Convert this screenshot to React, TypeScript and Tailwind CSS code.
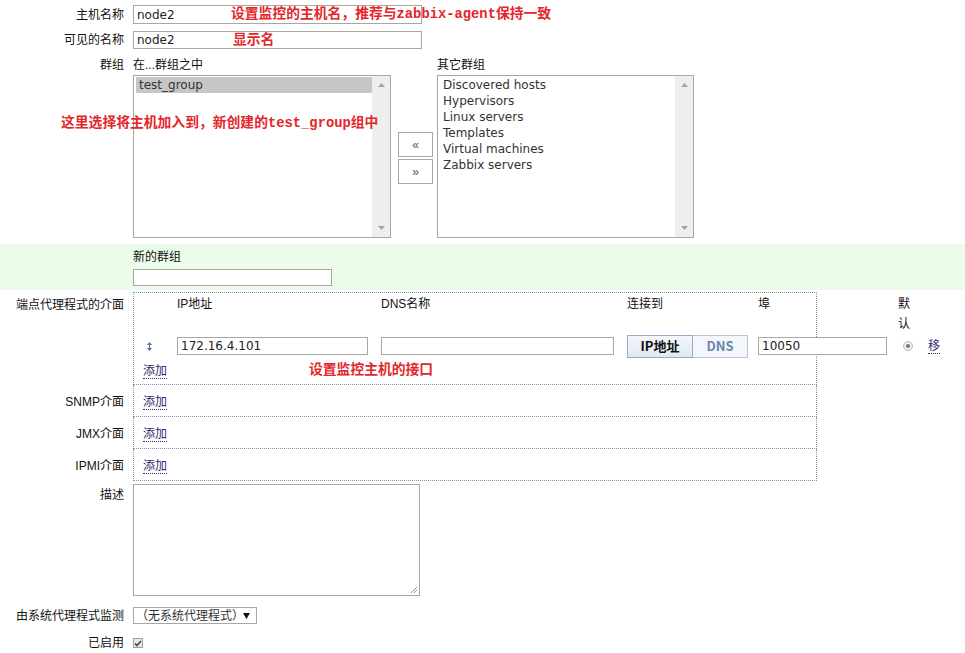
import clsx from "clsx";

const otherGroups = [
  "Discovered hosts",
  "Hypervisors",
  "Linux servers",
  "Templates",
  "Virtual machines",
  "Zabbix servers",
];

function Note({ children, className }: { children: React.ReactNode; className?: string }) {
  return (
    <span
      className={clsx(
        "absolute whitespace-nowrap font-['Liberation_Mono','Noto_Sans_CJK_SC',monospace] text-[13.8px] font-bold leading-[16px] text-[#e3262a]",
        className
      )}
    >
      {children}
    </span>
  );
}

function TextBox({ value, className }: { value?: string; className?: string }) {
  return (
    <div
      className={clsx(
        "flex items-center border border-[#a9a79f] bg-white pl-[3px] font-['DejaVu_Sans',sans-serif] text-[12px] text-[#222]",
        className
      )}
    >
      {value}
    </div>
  );
}

function ScrollTrack() {
  return (
    <div className="flex w-[18px] flex-col items-center justify-between bg-[#eeeeee] py-[7px]">
      <svg width="7" height="4" viewBox="0 0 7 4">
        <path d="M3.5 0 L7 4 L0 4 Z" fill="#a3a3a3" />
      </svg>
      <svg width="7" height="4" viewBox="0 0 7 4">
        <path d="M0 0 L7 0 L3.5 4 Z" fill="#a3a3a3" />
      </svg>
    </div>
  );
}

function ListBox({ items, selected, className }: { items: string[]; selected?: number; className?: string }) {
  return (
    <div className={clsx("flex h-[163px] border border-[#a9a79f] bg-white", className)}>
      <div className="flex-1 pl-[2px] pt-[1px] font-['DejaVu_Sans',sans-serif] text-[12px] leading-[16px] text-[#333]">
        {items.map((it, i) => (
          <div key={it} className={clsx("h-[16px] pl-[3px]", i === selected && "bg-[#c6c6c6]")}>
            {it}
          </div>
        ))}
      </div>
      <ScrollTrack />
    </div>
  );
}

function AddLink() {
  return (
    <span className="border-b border-dotted border-[#2e2a6e] leading-[14px] text-[#2e2a6e]">添加</span>
  );
}

function Label({ children, className }: { children: React.ReactNode; className?: string }) {
  return <div className={clsx("w-[124px] shrink-0 text-right", className)}>{children}</div>;
}

function InterfaceRow({ label }: { label: string }) {
  return (
    <div className="flex h-[32px] items-center">
      <Label className="pt-[2px]">{label}</Label>
      <div className="ml-[9px] flex h-[32px] w-[684px] items-center border-x border-b border-dotted border-[#8593a6] pl-[9px] pt-[3px]">
        <AddLink />
      </div>
    </div>
  );
}

export default function App() {
  return (
    <div className="relative h-[653px] w-[965px] overflow-hidden bg-white pt-[5px] font-['Liberation_Sans','Noto_Sans_CJK_SC',sans-serif] text-[12px] text-[#111]">
      {/* host name */}
      <div className="flex h-[19px] items-center">
        <Label>主机名称</Label>
        <div className="relative ml-[9px]">
          <TextBox value="node2" className="h-[19px] w-[289px]" />
          <Note className="left-[98px] top-[2px]">设置监控的主机名，推荐与zabbix-agent保持一致</Note>
        </div>
      </div>

      {/* visible name */}
      <div className="mt-[7px] flex h-[18px] items-center">
        <Label>可见的名称</Label>
        <div className="relative ml-[9px]">
          <TextBox value="node2" className="h-[18px] w-[289px]" />
          <Note className="left-[100px] top-[2px]">显示名</Note>
        </div>
      </div>

      {/* groups */}
      <div className="relative mt-[7px] flex">
        <Label className="leading-[18px]">群组</Label>
        <div className="ml-[9px] flex">
          <div className="w-[258px]">
            <div className="h-[18px] leading-[18px]">在...群组之中</div>
            <ListBox items={["test_group"]} selected={0} className="mt-[1px]" />
          </div>
          <div className="ml-[7px] flex flex-col gap-[2px] pt-[76px]">
            <button className="h-[25px] w-[35px] border border-[#a9a79f] bg-white text-[12px] leading-none text-[#555]">
              «
            </button>
            <button className="h-[25px] w-[35px] border border-[#a9a79f] bg-white text-[12px] leading-none text-[#555]">
              »
            </button>
          </div>
          <div className="ml-[4px] w-[257px]">
            <div className="h-[18px] leading-[18px]">其它群组</div>
            <ListBox items={otherGroups} className="mt-[1px]" />
          </div>
        </div>
        <Note className="left-[61px] top-[60px]">这里选择将主机加入到，新创建的test_group组中</Note>
      </div>

      {/* new group */}
      <div className="mt-[6px] flex h-[46px] bg-[#ebfdea] pt-[5px]">
        <Label />
        <div className="ml-[9px]">
          <div className="leading-[16px]">新的群组</div>
          <TextBox className="mt-[4px] h-[17px] w-[199px]" />
        </div>
      </div>

      {/* agent interfaces */}
      <div className="mt-[2px] flex">
        <Label className="pt-[5px] leading-[16px]">端点代理程式的介面</Label>
        <div className="relative ml-[9px] h-[93px] w-[684px] border border-dotted border-[#8593a6]">
          <div className="absolute left-[9px] top-0 w-[800px]">
            <div className="flex h-[40px] items-start pt-[1px] leading-[20px]">
              <div className="w-[34px]" />
              <div className="w-[204px]">IP地址</div>
              <div className="w-[246px]">DNS名称</div>
              <div className="w-[131px]">连接到</div>
              <div className="w-[140px]">埠</div>
              <div className="w-[30px]">
                默<br />认
              </div>
            </div>
            <div className="mt-[1px] flex h-[24px] items-center">
              <div className="w-[34px] pl-[4px]">
                <svg width="5" height="9" viewBox="0 0 5 9">
                  <path d="M2.5 0 L5 3 L0 3 Z M2 3 H3 V6 H2 Z M0 6 L5 6 L2.5 9 Z" fill="#4a6fa5" />
                </svg>
              </div>
              <div className="w-[204px]">
                <TextBox value="172.16.4.101" className="h-[18px] w-[191px]" />
              </div>
              <div className="w-[246px]">
                <TextBox className="h-[18px] w-[233px]" />
              </div>
              <div className="flex w-[131px]">
                <div className="flex h-[23px] w-[66px] items-center justify-center border border-[#98abc2] bg-gradient-to-b from-[#f4f7fb] to-[#dfe8f2] font-['Noto_Sans_CJK_SC',sans-serif] text-[13px] font-bold text-[#111]">
                  IP地址
                </div>
                <div className="flex h-[23px] w-[55px] items-center justify-center border border-l-0 border-[#b6c4d4] bg-[#f3f6fa] font-['Noto_Sans_CJK_SC',sans-serif] text-[13px] font-bold text-[#6a86ab]">
                  DNS
                </div>
              </div>
              <div className="w-[140px]">
                <TextBox value="10050" className="h-[18px] w-[129px]" />
              </div>
              <div className="flex w-[30px] pl-[5px]">
                <div className="flex h-[10px] w-[10px] items-center justify-center rounded-full border border-[#b8b8b8] bg-[#f0f0f0]">
                  <div className="h-[4px] w-[4px] rounded-full bg-[#777]" />
                </div>
              </div>
              <span className="border-b border-dotted border-[#2e2a6e] leading-[14px] text-[#2e2a6e]">移</span>
            </div>
            <div className="relative mt-[5px] h-[16px] leading-[16px]">
              <AddLink />
              <Note className="left-[166px] top-[0px]">设置监控主机的接口</Note>
            </div>
          </div>
        </div>
      </div>

      <InterfaceRow label="SNMP介面" />
      <InterfaceRow label="JMX介面" />
      <InterfaceRow label="IPMI介面" />

      {/* description */}
      <div className="mt-[3px] flex">
        <Label className="pt-[3px] leading-[16px]">描述</Label>
        <div className="relative ml-[9px] h-[112px] w-[287px] border border-[#a9a79f] bg-white">
          <svg className="absolute bottom-[2px] right-[2px]" width="7" height="7" viewBox="0 0 7 7">
            <path d="M7 1 L1 7 M7 4 L4 7" stroke="#999" strokeWidth="1" />
          </svg>
        </div>
      </div>

      {/* proxy */}
      <div className="mt-[11px] flex h-[17px] items-center">
        <Label>由系统代理程式监测</Label>
        <div className="ml-[9px] flex h-[17px] w-[124px] items-center justify-between border border-[#a9a79f] bg-white pl-[2px] pr-[6px] text-[#333]">
          <span>（无系统代理程式）</span>
          <svg width="7" height="6" viewBox="0 0 7 6">
            <path d="M0 0 L7 0 L3.5 6 Z" fill="#111" />
          </svg>
        </div>
      </div>

      {/* enabled */}
      <div className="mt-[12px] flex h-[14px] items-center">
        <Label>已启用</Label>
        <div className="ml-[9px] flex h-[10px] w-[10px] items-center justify-center border border-[#a0a0a0] bg-[#e9e9e9]">
          <svg width="8" height="7" viewBox="0 0 8 7">
            <path d="M1 3.5 L3 5.5 L7 1" stroke="#444" strokeWidth="1.6" fill="none" />
          </svg>
        </div>
      </div>
    </div>
  );
}
